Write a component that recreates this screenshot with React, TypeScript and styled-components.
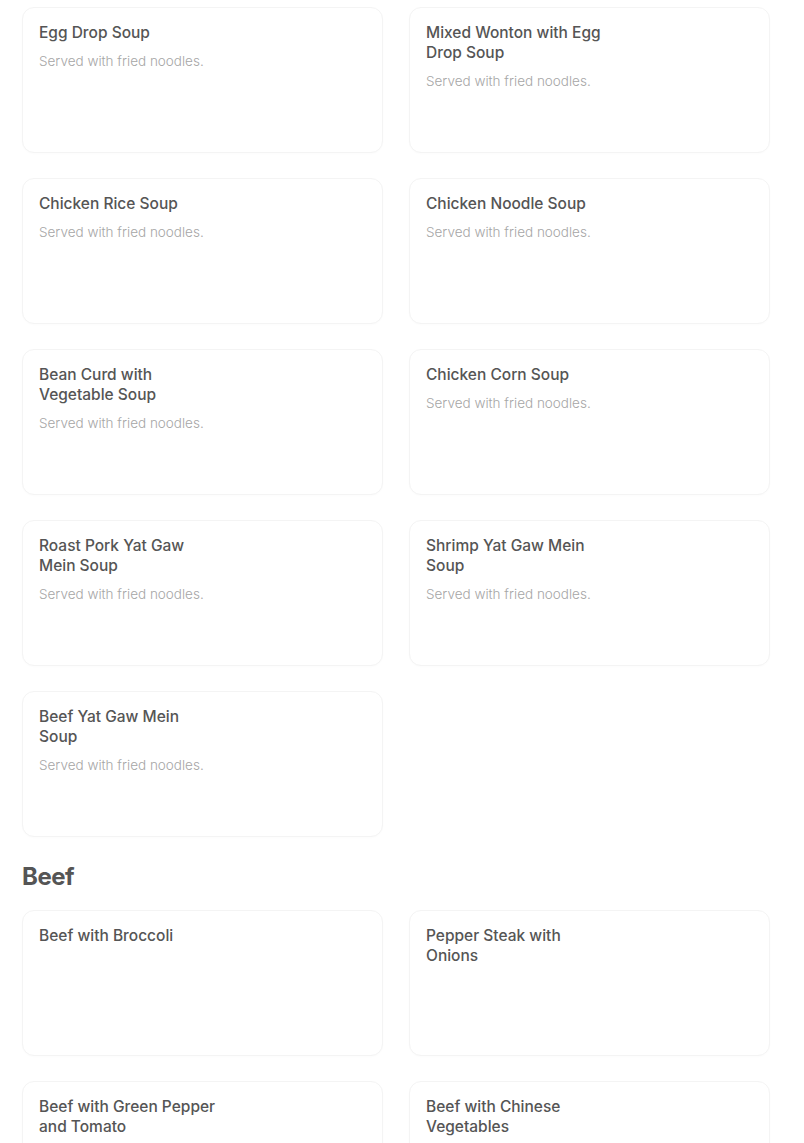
import * as React from "react";
import styled, { createGlobalStyle } from "styled-components";

const GlobalStyle = createGlobalStyle`
  body {
    margin: 0;
    background: #ffffff;
    font-family: Inter, Roboto, "Liberation Sans", sans-serif;
  }
`;

const Page = styled.div`
  width: 748px;
  padding: 7px 0 40px 22px;
`;

const Grid = styled.div`
  display: grid;
  grid-template-columns: 1fr 1fr;
  column-gap: 26px;
  row-gap: 25px;
`;

const Card = styled.div`
  box-sizing: border-box;
  height: 146px;
  padding: 15px 16px;
  border: 1px solid #f4f4f4;
  border-radius: 12px;
  background: #fff;
  box-shadow: 0 1px 2px rgba(0, 0, 0, 0.015);
`;

const Title = styled.div`
  max-width: 180px;
  font-size: 15.5px;
  line-height: 20px;
  font-weight: 500;
  color: #555555;
`;

const Desc = styled.div`
  margin-top: 8px;
  font-size: 13.5px;
  line-height: 20px;
  font-weight: 300;
  color: #a6a6a6;
`;

const SectionTitle = styled.h2`
  margin: 25px 0 18px;
  font-size: 24px;
  line-height: 30px;
  font-weight: 700;
  color: #555555;
  letter-spacing: -0.5px;
`;

interface Item {
  name: string;
  desc?: string;
}

const fried = "Served with fried noodles.";

const soups: Item[] = [
  { name: "Egg Drop Soup", desc: fried },
  { name: "Mixed Wonton with Egg Drop Soup", desc: fried },
  { name: "Chicken Rice Soup", desc: fried },
  { name: "Chicken Noodle Soup", desc: fried },
  { name: "Bean Curd with Vegetable Soup", desc: fried },
  { name: "Chicken Corn Soup", desc: fried },
  { name: "Roast Pork Yat Gaw Mein Soup", desc: fried },
  { name: "Shrimp Yat Gaw Mein Soup", desc: fried },
  { name: "Beef Yat Gaw Mein Soup", desc: fried },
];

const beef: Item[] = [
  { name: "Beef with Broccoli" },
  { name: "Pepper Steak with Onions" },
  { name: "Beef with Green Pepper and Tomato" },
  { name: "Beef with Chinese Vegetables" },
];

const MenuGrid: React.FC<{ items: Item[] }> = ({ items }) => (
  <Grid>
    {items.map(item => (
      <Card key={item.name}>
        <Title>{item.name}</Title>
        {item.desc && <Desc>{item.desc}</Desc>}
      </Card>
    ))}
  </Grid>
);

export default function App() {
  return (
    <>
      <GlobalStyle />
      <Page>
        <MenuGrid items={soups} />
        <SectionTitle>Beef</SectionTitle>
        <MenuGrid items={beef} />
      </Page>
    </>
  );
}
